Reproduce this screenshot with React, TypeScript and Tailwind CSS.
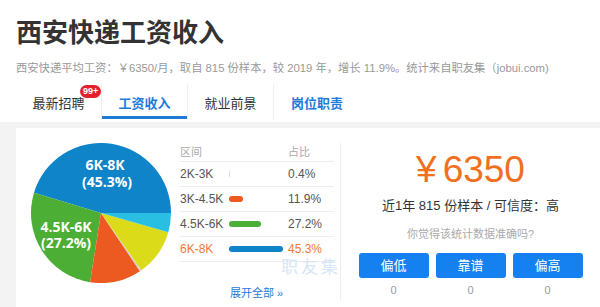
import React from 'react';

const CX = 70;
const CY = 70;
const R = 70;

const slices = [
    { from: 0, to: 163.1, color: '#0f84c9' },
    { from: 163.1, to: 261, color: '#4cae34' },
    { from: 261, to: 303.8, color: '#ec5a22' },
    { from: 303.8, to: 305.2, color: '#cfcfcf' },
    { from: 305.2, to: 344, color: '#dcdb1a' },
    { from: 344, to: 360, color: '#28bfe2' },
];

const pt = (deg: number) => {
    const a = (deg * Math.PI) / 180;
    return `${(CX + R * Math.cos(a)).toFixed(2)} ${(CY - R * Math.sin(a)).toFixed(2)}`;
};

const slicePath = (from: number, to: number) => {
    const large = to - from > 180 ? 1 : 0;
    return `M ${CX} ${CY} L ${pt(from)} A ${R} ${R} 0 ${large} 0 ${pt(to)} Z`;
};

const rows = [
    { range: '2K-3K', pct: '0.4%', width: 1, color: '#dddddd', hot: false },
    { range: '3K-4.5K', pct: '11.9%', width: 14, color: '#ec5a22', hot: false },
    { range: '4.5K-6K', pct: '27.2%', width: 32, color: '#4cae34', hot: false },
    { range: '6K-8K', pct: '45.3%', width: 54, color: '#0f84c9', hot: true },
];

const tabs = [
    { label: '最新招聘', active: false, badge: true, blue: false },
    { label: '工资收入', active: true, badge: false, blue: true },
    { label: '就业前景', active: false, badge: false, blue: false },
    { label: '岗位职责', active: false, badge: false, blue: true },
];

const PieChart: React.FC = () => (
    <svg width="140" height="140" viewBox="0 0 140 140" className="shrink-0">
        {slices.map((s, i) => (
            <path key={i} d={slicePath(s.from, s.to)} fill={s.color} />
        ))}
        <g fill="#ffffff" fontFamily="'Open Sans', 'Liberation Sans', sans-serif" fontWeight="700" fontSize="14" textAnchor="middle">
            <text x="74" y="27">6K-8K</text>
            <text x="76" y="44">(45.3%)</text>
            <text x="35" y="89">4.5K-6K</text>
            <text x="35" y="105">(27.2%)</text>
        </g>
    </svg>
);

export default function App() {
    return (
        <div
            className="w-[600px] h-[307px] overflow-hidden bg-[#f3f3f3] flex flex-col"
            style={{ fontFamily: "'Liberation Sans', 'Noto Sans CJK SC', sans-serif" }}
        >
            <div className="bg-white h-[122px] px-[16px] shrink-0">
                <h1 className="pt-[18px] text-[26px] leading-[30px] font-bold text-[#333333]">西安快递工资收入</h1>
                <p className="mt-[11px] text-[11.3px] leading-[18px] text-[#999999] whitespace-nowrap">
                    西安快递平均工资：￥6350/月，取自 815 份样本，较 2019 年，增长 11.9%。统计来自职友集（jobui.com)
                </p>
                <div className="mt-[7px] flex h-[36px]">
                    {tabs.map((t, i) => (
                        <div
                            key={t.label}
                            className={`relative w-[86px] flex items-center justify-center pt-[3px] text-[13px] ${
                                i < 3 ? 'border-r border-[#f0f0f0]' : ''
                            } ${t.blue ? 'text-[#1e7bd8] font-bold' : 'text-[#333333]'}`}
                        >
                            {t.label}
                            {t.badge && (
                                <span className="absolute left-[64px] top-[1px] h-[13px] px-[3px] rounded-full bg-[#e5202a] text-white text-[9px] leading-[13px] font-bold">
                                    99+
                                </span>
                            )}
                            {t.active && <span className="absolute left-0 right-0 bottom-[1px] h-[3px] bg-[#1e7bd8]" />}
                        </div>
                    ))}
                </div>
            </div>
            <div className="h-[6px] shrink-0" />
            <div className="flex-1 flex pl-[16px]">
                <div className="flex-1 bg-white flex pl-[15px] pt-[15px]">
                    <PieChart />
                    <div className="relative ml-[8px] w-[155px] text-[12px]">
                        <div className="flex h-[19px] items-center border-b border-[#eeeeee] text-[11px] text-[#aaaaaa]">
                            <span className="w-[109px] pl-[1px]">区间</span>
                            <span>占比</span>
                        </div>
                        {rows.map((r) => (
                            <div
                                key={r.range}
                                className={`flex h-[25px] items-center border-b border-[#eeeeee] ${r.hot ? 'text-[#f0783a]' : 'text-[#555555]'}`}
                            >
                                <span className="w-[50px] pl-[1px]">{r.range}</span>
                                <span className="w-[59px] flex items-center">
                                    <span className="h-[6px] rounded-full" style={{ width: r.width, backgroundColor: r.color }} />
                                </span>
                                <span>{r.pct}</span>
                            </div>
                        ))}
                        <div className="mt-[24px] text-center text-[11px] leading-[14px] text-[#1e7bd8]">展开全部 »</div>
                        <span className="absolute left-[102px] top-[112px] whitespace-nowrap text-[17px] tracking-[3px] text-[#d6e6f5] pointer-events-none">
                            职友集
                        </span>
                    </div>
                    <div className="ml-[6px] w-px h-[157px] bg-[#eeeeee]" />
                    <div className="flex-1 flex flex-col items-center">
                        <div className="mt-[5px] text-[37px] leading-[44px] text-[#f0701e]">
                            ¥<span className="ml-[6px]">6350</span>
                        </div>
                        <div className="mt-[4px] text-[13px] leading-[20px] text-[#333333]">近1年 815 份样本 / 可信度：高</div>
                        <div className="mt-[10px] text-[11px] leading-[16px] text-[#aaaaaa]">你觉得该统计数据准确吗?</div>
                        <div className="mt-[11px] flex gap-[7px]">
                            {['偏低', '靠谱', '偏高'].map((b) => (
                                <div key={b} className="flex flex-col items-center">
                                    <div className="w-[70px] h-[25px] rounded-[3px] bg-[#1580ef] text-white text-[13px] flex items-center justify-center">
                                        {b}
                                    </div>
                                    <div className="mt-[5px] text-[11px] leading-[14px] text-[#999999]">0</div>
                                </div>
                            ))}
                        </div>
                    </div>
                </div>
            </div>
        </div>
    );
}
